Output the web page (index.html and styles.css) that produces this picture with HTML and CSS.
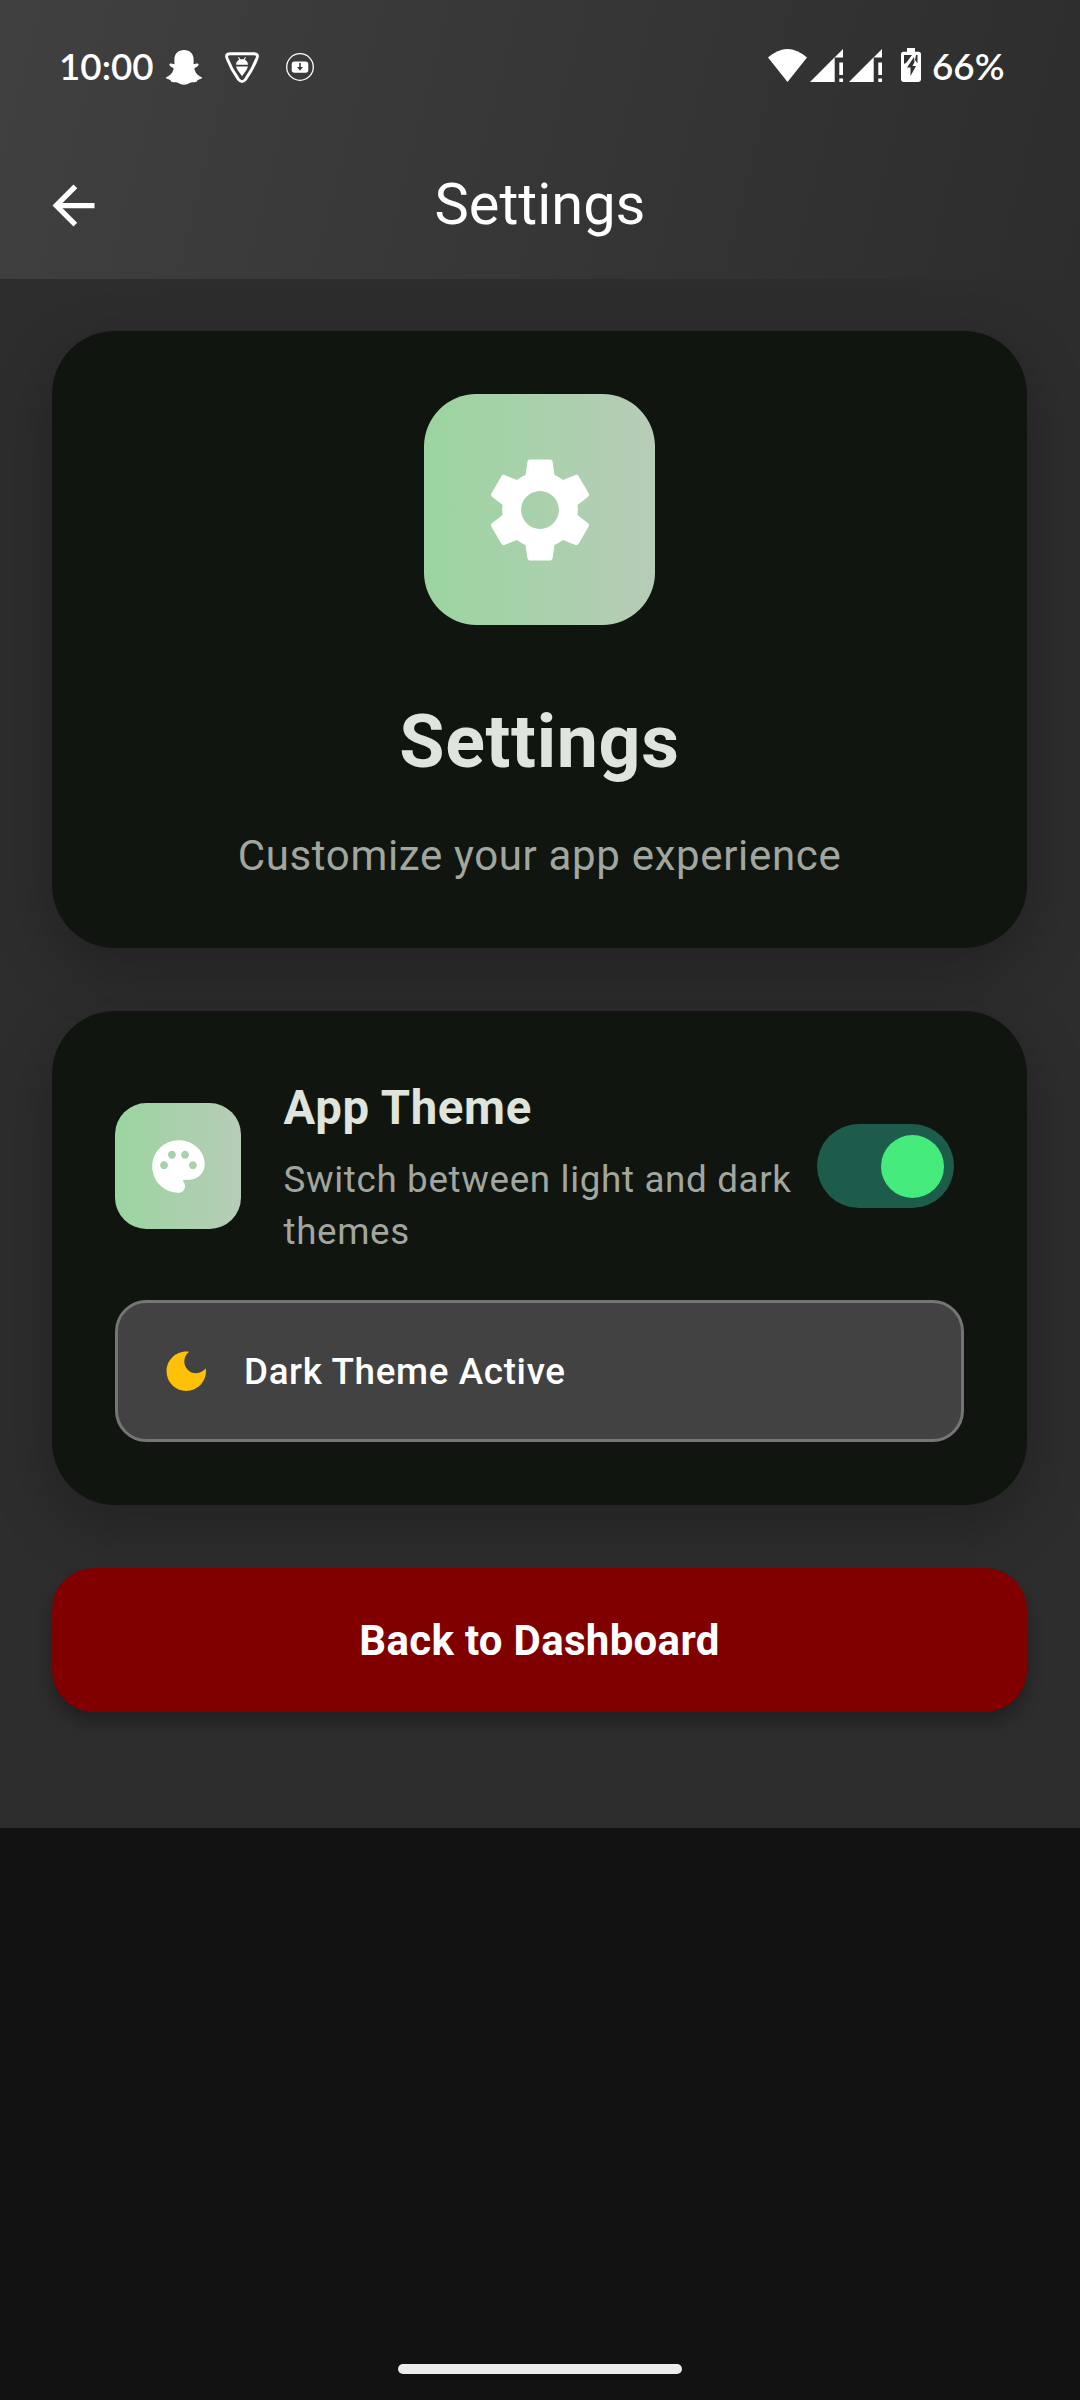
FILE: index.html
```html
<!DOCTYPE html>
<html lang="en">
<head>
<meta charset="utf-8">
<title>Settings</title>
<link rel="stylesheet" href="styles.css">
</head>
<body>
<div class="screen">
  <header class="header">
    <div class="status">
      <span class="status-text clock">10:00</span>
      <svg class="snap" width="36" height="40" viewBox="166 46 36 40" fill="#fff"><path d="M184 50c6 0 9.600 4 9.600 9.500v4.500c1.500.3 3-.9 4.200-.5 1.400.5 1 2-.4 2.900l-3 1.800c.3 4 3.300 7.300 7 8.800.9.400.8 1.200 0 1.600l-3.600 1.400c-.8.300-.6 1.700-1.600 2-1.700.4-3.600-.2-5.400.5-2.300 1-3.800 2.200-6.800 2.200s-4.500-1.200-6.800-2.200c-1.800-.7-3.700-.1-5.400-.5-1-.3-.8-1.700-1.600-2l-3.600-1.400c-.8-.4-.9-1.200 0-1.600 3.700-1.500 6.700-4.800 7-8.800l-3-1.800c-1.400-.9-1.800-2.400-.4-2.900 1.200-.4 2.700.8 4.200.5v-4.500c0-5.500 3.600-9.500 9.600-9.500z"/></svg>
      <svg class="shield" width="36" height="40" viewBox="224 46 36 40"><path d="M230 53.700h24q4.800 0 2.900 4.700-4 10.500-11.400 21-3.500 4.400-7 0-7.400-10.500-11.400-21-1.900-4.700 2.900-4.700z" fill="none" stroke="#fff" stroke-width="2.900"/><path d="M236 64.800q.3-4.200 3.300-5.100l-1.300-2.200.8-.5 1.600 2.300h3.200l1.600-2.300.8.500-1.300 2.200q3 .9 3.300 5.100zM236 66.500h12l-1.500 3.500-4.500 6.200-4.500-6.200z" fill="#fff"/></svg>
      <svg class="saver" width="28" height="40" viewBox="286 46 28 40"><circle cx="300" cy="67" r="13.300" fill="none" stroke="#fff" stroke-width="1.300"/><rect x="291.700" y="61.400" width="16.600" height="11.400" rx="2.800" fill="#fff"/><path d="M299.200 63h1.600v4h2.200l-3 3.800-3-3.800h2.200z" fill="#3a3a3a"/></svg>
      <span class="spacer"></span>
      <svg class="wifi" width="40" height="40" viewBox="767 46 40 40" fill="#fff"><path d="M787.500 82 768 57.500q19.500-17 39 0z"/></svg>
      <svg class="signal" width="33" height="40" viewBox="810 46 33 40" fill="#fff"><path d="M810 82l24.700-24.700V82zM834.500 57.500 843 49v8.500zM839.300 62.500h3.700V75h-3.700zM839.300 78.500h3.700V82h-3.700z"/></svg>
      <svg class="signal second" width="33" height="40" viewBox="810 46 33 40" fill="#fff"><path d="M810 82l24.700-24.700V82zM834.500 57.500 843 49v8.500zM839.300 62.500h3.700V75h-3.700zM839.300 78.500h3.700V82h-3.700z"/></svg>
      <svg class="battery" width="20" height="40" viewBox="901 46 20 40" fill="#fff" fill-rule="evenodd"><path d="M907 48h8v3.700h3.500q2.500 0 2.500 2.500v25.400q0 2.400-2.500 2.400h-15q-2.500 0-2.500-2.400V54.200q0-2.500 2.500-2.500h3.500zM904 55v9l2.500-1.500L912 55zM914 57l-7 10.500h3.500V76l5.500-10h-3.500l2-4zM916 55l-1 5 2.500 3.200V55z"/></svg>
      <span class="status-text percent">66%</span>
    </div>
    <div class="appbar">
      <svg class="back" width="63" height="63" viewBox="0 0 24 24" fill="#fff"><path d="M20 11H7.830l5.590-5.590L12 4l-8 8 8 8 1.410-1.410L7.830 13H20v-2z"/></svg>
      <h1 class="appbar-title">Settings</h1>
    </div>
  </header>

  <main class="content">
    <section class="card hero">
      <div class="tile tile-large">
        <svg width="126" height="126" viewBox="0 0 24 24" fill="#fff"><path d="M19.140 12.940c.04-.3.06-.61.06-.94 0-.32-.02-.64-.07-.94l2.030-1.580c.18-.14.23-.41.12-.61l-1.920-3.320c-.12-.22-.37-.29-.59-.22l-2.390.96c-.5-.38-1.030-.7-1.620-.94l-.36-2.540c-.04-.24-.24-.41-.48-.41h-3.840c-.24 0-.43.17-.47.41l-.36 2.540c-.59.24-1.130.57-1.620.94l-2.390-.96c-.22-.08-.47 0-.59.22L2.740 8.870c-.12.21-.08.47.12.61l2.030 1.580c-.05.3-.09.63-.09.94s.02.64.07.94l-2.030 1.580c-.18.14-.23.41-.12.61l1.920 3.320c.12.22.37.29.59.22l2.390-.96c.5.38 1.030.7 1.620.94l.36 2.540c.05.24.24.41.48.41h3.840c.24 0 .44-.17.47-.41l.36-2.540c.59-.24 1.130-.56 1.620-.94l2.390.96c.22.08.47 0 .59-.22l1.920-3.320c.12-.22.07-.47-.12-.61l-2.010-1.580zM12 15.600c-1.980 0-3.600-1.620-3.600-3.600s1.620-3.600 3.600-3.600 3.600 1.620 3.600 3.600-1.620 3.600-3.600 3.600z"/></svg>
      </div>
      <h2 class="hero-title">Settings</h2>
      <p class="hero-subtitle">Customize your app experience</p>
    </section>

    <section class="card">
      <div class="theme-row">
        <div class="tile tile-small">
          <svg width="63" height="63" viewBox="0 0 24 24" fill="#fff"><path d="M12 2C6.490 2 2 6.490 2 12s4.490 10 10 10c1.380 0 2.500-1.120 2.500-2.500 0-.61-.23-1.200-.64-1.670-.08-.1-.13-.21-.13-.33 0-.28.22-.5.5-.5H16c3.310 0 6-2.690 6-6 0-4.960-4.490-9-10-9zm5.500 11c-.83 0-1.500-.67-1.500-1.500s.67-1.500 1.500-1.500 1.500.67 1.500 1.500-.67 1.500-1.500 1.500zm-3-4c-.83 0-1.500-.67-1.500-1.500S13.670 6 14.500 6s1.500.67 1.500 1.500S15.330 9 14.500 9zM5 11.500c0-.83.67-1.500 1.500-1.500s1.500.67 1.500 1.500S7.330 13 6.500 13 5 12.330 5 11.500zm6-4c0 .83-.67 1.500-1.500 1.500S8 8.330 8 7.500 8.670 6 9.500 6s1.500.67 1.500 1.500z"/></svg>
        </div>
        <div class="theme-text">
          <h3 class="theme-title">App Theme</h3>
          <p class="theme-desc">Switch between light and dark<br>themes</p>
        </div>
        <div class="switch" role="switch" aria-checked="true"><span class="thumb"></span></div>
      </div>
      <div class="theme-state">
        <svg width="52.500" height="52.500" viewBox="0 0 24 24" fill="#ffc107"><path d="M12 3c-4.970 0-9 4.030-9 9s4.030 9 9 9 9-4.030 9-9c0-.46-.04-.92-.1-1.360-.98 1.370-2.580 2.260-4.400 2.260-2.980 0-5.400-2.420-5.400-5.400 0-1.810.89-3.420 2.260-4.400-.44-.06-.9-.1-1.360-.1z"/></svg>
        <span>Dark Theme Active</span>
      </div>
    </section>

    <button class="dashboard" type="button">Back to Dashboard</button>
  </main>

  <footer class="nav"><span class="handle"></span></footer>
</div>
</body>
</html>
```
FILE: styles.css
```css
* {
  box-sizing: border-box;
}

body {
  margin: 0;
  background: #121212;
  font-family: Roboto, sans-serif;
}

h1, h2, h3, p {
  margin: 0;
}

svg {
  display: block;
  flex: none;
}

.screen {
  display: flex;
  flex-direction: column;
  width: 1080px;
  height: 2400px;
  overflow: hidden;
}

.header {
  height: 279px;
  background: linear-gradient(104.5deg, #404040, #2d2d2d);
}

.status {
  display: flex;
  align-items: center;
  height: 132px;
  padding: 0 76px 0 59px;
}

.status-text {
  color: #fff;
  font: 600 36.75px/40px Lato, sans-serif;
}

.clock {
  width: 107px;
}

.shield {
  margin-left: 22px;
}

.saver {
  margin-left: 26px;
}

.spacer {
  flex: 1;
}

.signal {
  margin-left: 3px;
}

.second {
  margin-left: 6px;
}

.battery {
  margin-left: 19px;
}

.percent {
  width: 72px;
  margin-left: 11px;
}

.appbar {
  display: grid;
  grid-template-columns: 63px 1fr 63px;
  align-items: center;
  height: 147px;
  padding: 0 42px;
}

.appbar-title {
  padding-bottom: 3px;
  color: #fff;
  font-size: 57.75px;
  font-weight: 400;
  line-height: 74px;
  text-align: center;
}

.content {
  display: flex;
  flex-direction: column;
  gap: 63px;
  height: 1549px;
  padding: 52px 53px 0 52px;
  background: #2d2d2d;
}

.card {
  padding: 63px;
  border-radius: 63px;
  background: #101510;
  box-shadow: 0 21px 60px rgba(0, 0, 0, 0.25);
}

.hero {
  display: flex;
  flex-direction: column;
  align-items: center;
  height: 617px;
}

.tile {
  display: flex;
  flex: none;
  align-items: center;
  justify-content: center;
  background: linear-gradient(90deg, #9bd5a0, #b7ccb7);
}

.tile-large {
  width: 231px;
  height: 231px;
  border-radius: 52.5px;
}

.tile-small {
  width: 126px;
  height: 126px;
  border-radius: 31.5px;
}

.hero-title {
  margin-top: 65px;
  color: #dfe4dc;
  font-size: 73.5px;
  font-weight: 700;
  line-height: 105px;
  letter-spacing: 0.66px;
}

.hero-subtitle {
  margin-top: 29px;
  color: #a1a69f;
  font-size: 42px;
  line-height: 63px;
  letter-spacing: 0.66px;
}

.theme-row {
  display: flex;
  align-items: center;
  height: 184px;
}

.theme-text {
  flex: 1;
  margin-left: 42.5px;
  white-space: nowrap;
}

.theme-title {
  color: #dfe4dc;
  font-size: 47.25px;
  font-weight: 700;
  line-height: 69px;
  letter-spacing: 0.66px;
}

.theme-desc {
  margin-top: 11.5px;
  color: #a1a69f;
  font-size: 36.75px;
  line-height: 52px;
  letter-spacing: 0.66px;
}

.switch {
  display: flex;
  flex: none;
  justify-content: flex-end;
  width: 137px;
  height: 84px;
  margin-right: 10px;
  padding: 10.5px;
  border-radius: 42px;
  background: #1d5c4b;
}

.thumb {
  width: 63px;
  height: 63px;
  border-radius: 50%;
  background: #45ec7c;
}

.theme-state {
  display: flex;
  align-items: center;
  gap: 31.5px;
  height: 142px;
  margin-top: 42px;
  padding: 0 42px;
  border: 3px solid #757575;
  border-radius: 31.5px;
  background: #424242;
  color: #fff;
  font-size: 36.75px;
  font-weight: 500;
  letter-spacing: 0.66px;
}

.dashboard {
  height: 144px;
  padding: 1px 0 0;
  border: 0;
  border-radius: 42px;
  background: #800000;
  box-shadow: 0 10px 16px rgba(0, 0, 0, 0.3);
  color: #fff;
  font: 700 42px/60px Roboto, sans-serif;
  letter-spacing: 0.3px;
}

.nav {
  display: flex;
  flex: 1;
  align-items: flex-end;
  justify-content: center;
  padding-bottom: 26px;
}

.handle {
  width: 284px;
  height: 10px;
  border-radius: 5px;
  background: #ececec;
}
```
